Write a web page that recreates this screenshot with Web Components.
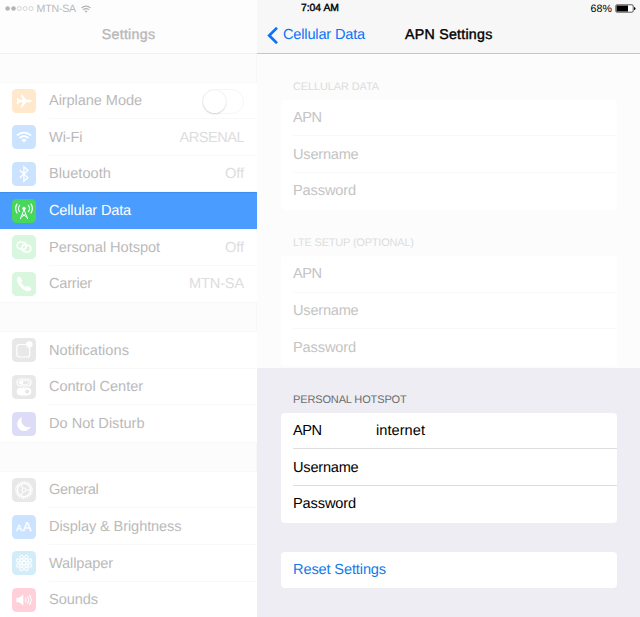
<!DOCTYPE html>
<html lang="en">
<head>
<meta charset="utf-8">
<title>APN Settings</title>
<style>
html,body{margin:0;height:617px;overflow:hidden;background:#fcfcfc}
body{font:14px/20px "Liberation Sans",Arial,sans-serif;color:#000;text-rendering:geometricPrecision}
</style>
</head>
<body>
<settings-app></settings-app>
<script>
const meter = document.createElement('canvas').getContext('2d');

/* Text with an exact advance width, spread over its letter spacing. */
customElements.define('fit-text', class extends HTMLElement {
  connectedCallback() {
    if (this.shadowRoot) return;
    const size = +(this.getAttribute('size') || 14.6), w = +this.getAttribute('w');
    const text = this.textContent;
    meter.font = size + 'px "Liberation Sans"';
    const gap = (w - meter.measureText(text).width) / text.length;
    this.attachShadow({mode: 'open'}).innerHTML = `<style>
      :host{display:inline-block;flex:none;white-space:nowrap;width:${w}px;font-size:${size}px;letter-spacing:${gap.toFixed(3)}px}
      :host([medium]){-webkit-text-stroke:.4px currentColor}
    </style><slot></slot>`;
  }
});

const ICONS = {
  airplane: ['#ffe8cb', '<path fill="#fff" d="M19.8 12c0 .8-.8 1.2-2.2 1.2h-3.4l-4 5.3H8.6l2-5.3H7.4L6 15.1H4.7L5.4 12l-.7-3.1H6l1.4 1.9h3.2l-2-5.3h1.6l4 5.3h3.4c1.4 0 2.2.4 2.2 1.2z"/>'],
  wifi: ['#cbe3ff', '<g fill="none" stroke="#fff" stroke-width="1.8"><path d="M5.1 10.4a9.8 9.8 0 0 1 13.8 0M7.6 13a6.2 6.2 0 0 1 8.8 0"/></g><path fill="#fff" d="M9.5 15a3.6 3.6 0 0 1 5 0L12 17.5z"/>'],
  bluetooth: ['#cbe3ff', '<path fill="none" stroke="#fff" stroke-width="1.3" d="m7.8 8.2 8.1 7.5-4 3.5V4.8l4 3.5-8.1 7.5"/>'],
  cellular: ['#48d75d', '<g fill="none" stroke="#fff" stroke-width="1"><path d="M12 10.5 8.3 20M12 10.5l3.7 9.5M9 18.1l5-3M15 18.1l-5-3"/><path d="M7.9 6.100a5 5 0 0 0 0 6.800M16.100 6.100a5 5 0 0 1 0 6.800M5.300 4.700a8.200 8.200 0 0 0 0 9.600M18.700 4.700a8.200 8.200 0 0 1 0 9.600" stroke-width="1.200"/></g><circle cx="12" cy="9.4" r="1.7" fill="#fff"/>'],
  hotspot: ['#d9f7de', '<g fill="none" stroke="#fff" stroke-width="1.6"><rect x="5.2" y="7.3" width="9" height="6.7" rx="3.3" transform="rotate(12 9.7 10.6)"/><rect x="9.8" y="10" width="9" height="6.7" rx="3.3" transform="rotate(12 14.3 13.4)"/></g>'],
  phone: ['#d9f7de', '<path fill="#fff" d="M5.2 6.4c.8-1.4 2.1-2.1 2.9-1.3l2.1 3c.4.7-.2 1.3-1.1 2.1 1 2.1 2.5 3.8 4.7 4.9.9-.9 1.5-1.5 2.2-1l3 2c.9.8-.1 2.2-1.4 3C13.200 21.2 3.400 11.400 5.200 6.400z"/>'],
  notifications: ['#e8e8e8', '<path fill="none" stroke="#fff" stroke-width="1.2" d="M14 6.5H7.300A2.500 2.500 0 0 0 4.900 9v7.500A2.500 2.500 0 0 0 7.300 19h7.900a2.500 2.500 0 0 0 2.500-2.500V10"/><circle cx="17.300" cy="6.500" r="3.200" fill="#fff"/>'],
  control: ['#e8e8e8', '<rect x="5" y="4" width="14" height="7" rx="3.500" fill="none" stroke="#fff" stroke-width="1.200"/><circle cx="9" cy="7.500" r="2.200" fill="#fff"/><path d="M10 5.500h5a2 2 0 0 1 0 4h-5" fill="none" stroke="#fff" stroke-width=".8"/><rect x="4.700" y="12.800" width="14.600" height="7.600" rx="3.800" fill="#fff"/><circle cx="15.200" cy="16.600" r="2.100" fill="#e8e8e8"/>'],
  moon: ['#dddcf7', '<path fill="#fff" d="M10.300 5.300A7 7 0 1 0 18.800 14.500 6.600 6.600 0 0 1 10.300 5.300z"/>'],
  general: ['#e8e8e8', '<g fill="none" stroke="#fff"><circle cx="12" cy="12" r="8" stroke-width="1.800" stroke-dasharray="1.150 .944"/><circle cx="12" cy="12" r="6.600" stroke-width="1.300"/><circle cx="12" cy="12" r="2" stroke-width=".9"/><path d="M14 12h4.500M11 10.300 8.600 6.200M11 13.700l-2.400 4.100" stroke-width="1.100"/></g>'],
  display: ['#cbe3ff', '<g fill="#fff" font-family="Liberation Sans, Arial, sans-serif" stroke="#fff" stroke-width=".3"><text x="4.100" y="16" font-size="9">A</text><text x="10.700" y="16" font-size="13">A</text></g>'],
  wallpaper: ['#d2edf8', '<g fill="none" stroke="#fff" stroke-width="1"><circle cx="12" cy="12" r="1.800"/>' +
    [0,45,90,135,180,225,270,315].map(a => `<ellipse cx="12" cy="8.300" rx="1.300" ry="1.600" transform="rotate(${a} 12 12)"/><circle cx="12" cy="5.500" r="1.700" transform="rotate(${a+22.5} 12 12)"/>`).join('') + '</g>'],
  sounds: ['#ffd0da', '<path fill="#fff" d="M4.300 9.800h3l4-3.200v10.800l-4-3.200h-3z"/><g fill="none" stroke="#fff" stroke-width="1.100"><path d="M13.200 9.700a4 4 0 0 1 0 4.600M15.300 8.300a6.500 6.500 0 0 1 0 7.400M17.400 6.900a9 9 0 0 1 0 10.200"/></g>']
};

customElements.define('tile-icon', class extends HTMLElement {
  connectedCallback() {
    const [bg, art] = ICONS[this.getAttribute('name')];
    this.attachShadow({mode: 'open'}).innerHTML = `<style>
      :host{display:block;flex:none;width:24px;height:24px;border-radius:4.500px;background:${bg}}
      svg{display:block}
    </style><svg width="24" height="24" viewBox="0 0 24 24">${art}</svg>`;
  }
});

customElements.define('toggle-switch', class extends HTMLElement {
  connectedCallback() {
    this.attachShadow({mode: 'open'}).innerHTML = `<style>
      :host{display:flex;box-sizing:border-box;width:42px;height:25px;border:1px solid #f6f6f6;border-radius:13px}
      i{width:23px;height:23px;border-radius:50%;background:#fff;box-shadow:0 1px 2px rgba(0,0,0,.14),0 0 1px rgba(0,0,0,.12)}
    </style><i></i>`;
  }
});

customElements.define('nav-row', class extends HTMLElement {
  connectedCallback() {
    this.attachShadow({mode: 'open'}).innerHTML = `<style>
      :host{display:flex;height:36.65px;padding-left:12.4px;box-sizing:border-box;align-items:center;color:#bababa}
      :host([selected]){background:#4a9cff;color:#fff;box-shadow:inset 0 1px #3d8eef}
      .line{flex:1;height:100%;box-sizing:border-box;margin-left:12.6px;padding:1.6px 13px 0 0;display:flex;align-items:center;justify-content:space-between;border-bottom:1px solid #f8f8f8}
      :host([selected]) .line,:host(:last-of-type) .line{border-color:transparent}
      .end{color:#dddddd;display:flex}
    </style><tile-icon name="${this.getAttribute('icon')}"></tile-icon>
    <div class="line"><slot></slot><span class="end"><slot name="value"></slot></span></div>`;
  }
});

customElements.define('nav-group', class extends HTMLElement {
  connectedCallback() {
    this.attachShadow({mode: 'open'}).innerHTML = `<style>
      :host{display:block;background:#fff;box-shadow:0 -1px #f8f8f8,0 1px #f8f8f8}
    </style><slot></slot>`;
  }
});

customElements.define('form-row', class extends HTMLElement {
  connectedCallback() {
    this.attachShadow({mode: 'open'}).innerHTML = `<style>
      :host{display:block;padding-left:12.5px;height:36.7px;box-sizing:border-box}
      div{height:100%;box-sizing:border-box;padding-top:1px;display:grid;grid-template-columns:83px 1fr;align-items:center;border-bottom:1px solid var(--line)}
      :host(:last-of-type) div{border-color:transparent}
    </style><div><slot></slot></div>`;
  }
});

customElements.define('form-group', class extends HTMLElement {
  connectedCallback() {
    this.attachShadow({mode: 'open'}).innerHTML = `<style>
      :host{display:block;margin:0 23.5px;color:#000;--line:#dedee1}
      :host([faded]){color:#c4c4c4;--line:#f8f8f8}
      header{display:flex;align-items:center;height:25px;padding-left:12.5px;color:#6c6c70}
      :host([faded]) header{color:#dcdcdc}
      :host([plain]) header{display:none}
      section{background:#fff;border-radius:4px}
    </style><header><slot name="title"></slot></header><section><slot></slot></section>`;
  }
});

customElements.define('master-pane', class extends HTMLElement {
  connectedCallback() {
    const row = (icon, label, w, value = '', attr = '') =>
      `<nav-row icon="${icon}" ${attr}><fit-text w="${w}">${label}</fit-text>${value}</nav-row>`;
    const val = (t, w) => `<fit-text slot="value" w="${w}">${t}</fit-text>`;
    this.attachShadow({mode: 'open'}).innerHTML = `<style>
      :host{display:block;width:257px;height:617px;overflow:hidden;background:#fcfcfc;box-shadow:inset -1px 0 #f7f7f7}
      .bar{height:53.500px;box-sizing:border-box;border-bottom:1px solid #f1f1f1;background:#fdfdfd;color:#b9b9b9}
      .status{height:17px;display:flex;align-items:center;padding-left:5px}
      .status svg{display:block}
      .status fit-text{margin:0 5px 0 2.500px}
      .title{height:36px;display:flex;align-items:center;justify-content:center}
      .groups{display:grid;gap:29.700px;padding-top:29px}
    </style>
    <div class="bar">
      <div class="status">
        <svg width="29" height="7" viewBox="0 0 29 7"><g fill="#b4b4b4"><circle cx="2.600" cy="3.500" r="2.300"/><circle cx="8.500" cy="3.500" r="2.300"/></g><g fill="none" stroke="#c4c4c4" stroke-width=".7"><circle cx="14.300" cy="3.500" r="2"/><circle cx="20.200" cy="3.500" r="2"/><circle cx="26.100" cy="3.500" r="2"/></g></svg>
        <fit-text w="39.500" size="10.6">MTN-SA</fit-text>
        <svg width="10" height="8" viewBox="0 0 10 8"><g fill="none" stroke="#b4b4b4" stroke-width="1.100"><path d="M.5 3a6.400 6.400 0 0 1 9 0M2.100 4.800a4.100 4.100 0 0 1 5.800 0"/></g><path d="M3.500 6.100a2.200 2.200 0 0 1 3 0L5 7.700z" fill="#b4b4b4"/></svg>
      </div>
      <div class="title"><fit-text medium w="53.500" size="14.2">Settings</fit-text></div>
    </div>
    <div class="groups">
      <nav-group>
        ${row('airplane','Airplane Mode',93,'<toggle-switch slot="value"></toggle-switch>')}
        ${row('wifi','Wi-Fi',33.5,val('ARSENAL',64.5))}
        ${row('bluetooth','Bluetooth',62,val('Off',19))}
        ${row('cellular','Cellular Data',82,'','selected')}
        ${row('hotspot','Personal Hotspot',111,val('Off',19))}
        ${row('phone','Carrier',43,val('MTN-SA',55))}
      </nav-group>
      <nav-group>
        ${row('notifications','Notifications',80)}
        ${row('control','Control Center',94)}
        ${row('moon','Do Not Disturb',95.5)}
      </nav-group>
      <nav-group>
        ${row('general','General',49.5)}
        ${row('display','Display &amp; Brightness',132.5)}
        ${row('wallpaper','Wallpaper',64)}
        ${row('sounds','Sounds',49)}
      </nav-group>
    </div>`;
  }
});

customElements.define('detail-pane', class extends HTMLElement {
  connectedCallback() {
    const rows = (apn = '') => `<form-row><fit-text w="28.500">APN</fit-text>${apn}</form-row>
      <form-row><fit-text w="65.500">Username</fit-text></form-row>
      <form-row><fit-text w="63">Password</fit-text></form-row>`;
    this.attachShadow({mode: 'open'}).innerHTML = `<style>
      :host{display:flex;flex-direction:column;width:383px;height:617px;background:#fcfcfc}
      .bar{height:53.500px;flex:none;box-sizing:border-box;background:#f7f7f7;border-bottom:1px solid #c6c6c8}
      .status{height:17px;display:flex;align-items:center;justify-content:space-between;padding:0 4px 0 44px}
      .battery{display:flex;align-items:center;gap:3px}
      .nav{height:36px;display:flex;align-items:center;padding-left:10px}
      .back{display:flex;align-items:center;gap:5px;color:#0b74f5;width:138px}
      .faded{flex:none;height:314px;box-sizing:border-box;padding-top:21.200px;display:flex;flex-direction:column;gap:21.200px}
      .active{flex:1;background:#eeedf3;padding-top:20px;display:flex;flex-direction:column;gap:29.200px}
    </style>
    <div class="bar">
      <div class="status"><fit-text medium w="38.500" size="10.400">7:04 AM</fit-text>
        <div class="battery"><fit-text w="21.500" size="10.600">68%</fit-text>
          <svg width="21" height="9" viewBox="0 0 21 9"><rect x=".8" y=".8" width="17.400" height="7.400" rx="1.200" fill="#fff" stroke="#333" stroke-width=".8"/><path d="M1.500 1.500H13v6H1.500z"/><path d="M19 3q1.500 0 1.500 1.500T19 6z"/></svg></div></div>
      <div class="nav"><div class="back"><svg width="11" height="17" viewBox="0 0 11 17"><path d="M10 .800 2.200 8.500 10 16.200" fill="none" stroke="#0b74f5" stroke-width="2.700"/></svg><fit-text w="82">Cellular Data</fit-text></div>
        <fit-text medium w="87.500" size="14.200">APN Settings</fit-text></div>
    </div>
    <div class="faded">
      <form-group faded><fit-text slot="title" size="11" w="86">CELLULAR DATA</fit-text>${rows()}</form-group>
      <form-group faded><fit-text slot="title" size="11" w="121">LTE SETUP (OPTIONAL)</fit-text>${rows()}</form-group>
    </div>
    <div class="active">
      <form-group><fit-text slot="title" size="11" w="114">PERSONAL HOTSPOT</fit-text>${rows('<fit-text w="49">internet</fit-text>')}</form-group>
      <form-group plain><form-row><fit-text w="93" style="color:#127aea">Reset Settings</fit-text></form-row></form-group>
    </div>`;
  }
});

customElements.define('settings-app', class extends HTMLElement {
  connectedCallback() {
    this.attachShadow({mode: 'open'}).innerHTML = `<style>
      :host{display:grid;grid-template-columns:257px 383px;width:640px;height:617px;overflow:hidden}
    </style><master-pane></master-pane><detail-pane></detail-pane>`;
  }
});
</script>
</body>
</html>
